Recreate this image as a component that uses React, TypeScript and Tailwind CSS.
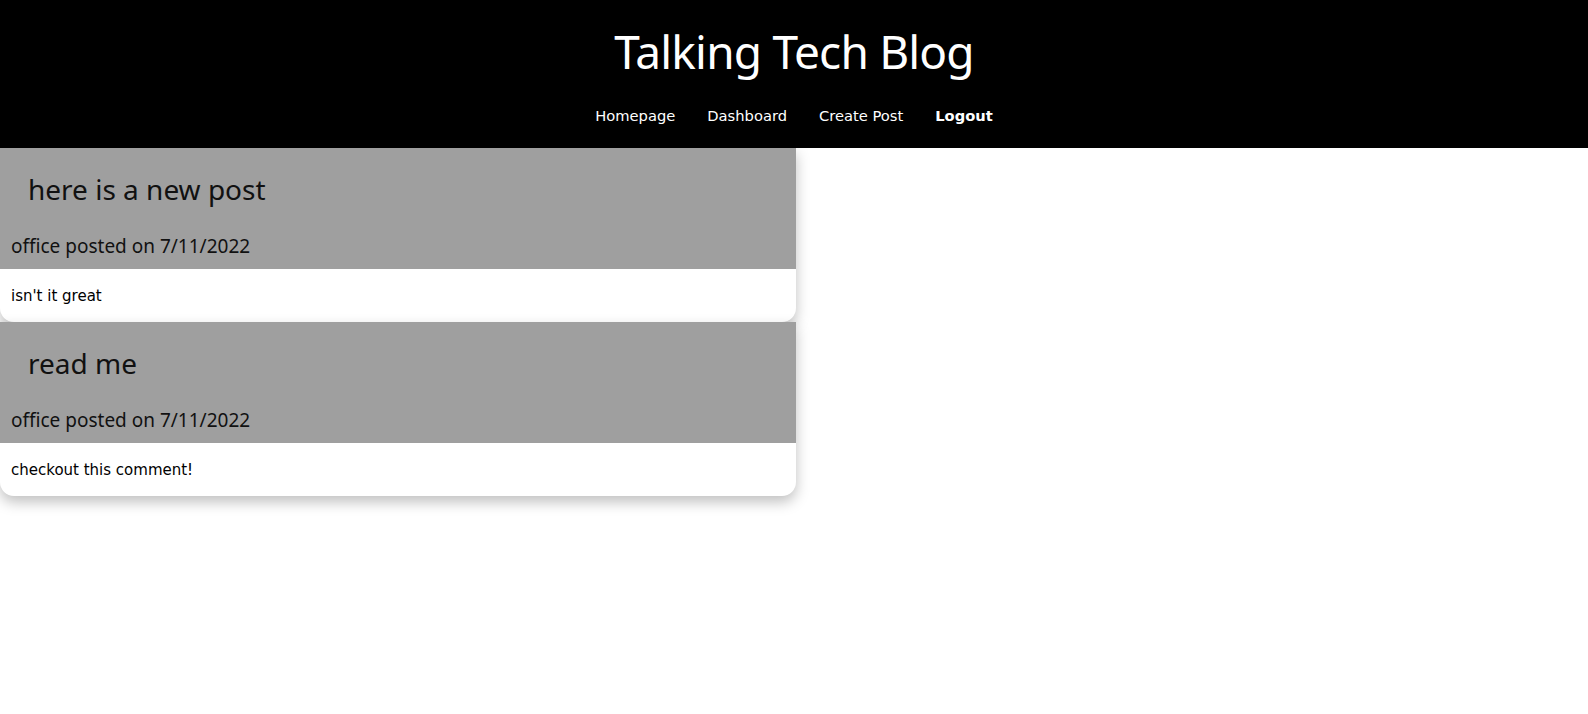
import React from "react";

const posts = [
  { title: "here is a new post", author: "office", date: "7/11/2022", body: "isn't it great" },
  { title: "read me", author: "office", date: "7/11/2022", body: "checkout this comment!" },
];

export default function App() {
  return (
    <div className="min-h-[714px] bg-white" style={{ fontFamily: '"DejaVu Sans", Verdana, sans-serif' }}>
      <header className="h-[148px] bg-black text-white flex flex-col items-center">
        <h1
          className="mt-[21px] text-[46px] leading-[60px] font-normal tracking-[-0.8px]"
          style={{ fontFamily: '"Noto Sans", "Open Sans", sans-serif' }}
        >
          Talking Tech Blog
        </h1>
        <nav className="mt-[25px] flex gap-[32px] text-[14.7px] leading-[20px]">
          <a>Homepage</a>
          <a>Dashboard</a>
          <a>Create Post</a>
          <a className="font-bold">Logout</a>
        </nav>
      </header>
      <main className="w-[796px]">
        {posts.map((p, i) => (
          <article key={i} className="rounded-b-[14px] bg-white shadow-[0_6px_14px_rgba(0,0,0,0.25)] overflow-hidden">
            <div className="bg-[#9f9f9f] h-[121px] text-[#111]" style={{ fontFamily: '"Noto Sans", "Open Sans", sans-serif' }}>
              <h2 className="pl-[28px] pt-[21px] text-[28px] leading-[40px] font-normal">{p.title}</h2>
              <p className="pl-[11px] mt-[23px] text-[19px] leading-[28px]">
                {p.author} posted on {p.date}
              </p>
            </div>
            <div className="h-[53px] pl-[11px] pt-[17px] text-[15px] leading-[20px] text-black">{p.body}</div>
          </article>
        ))}
      </main>
    </div>
  );
}
